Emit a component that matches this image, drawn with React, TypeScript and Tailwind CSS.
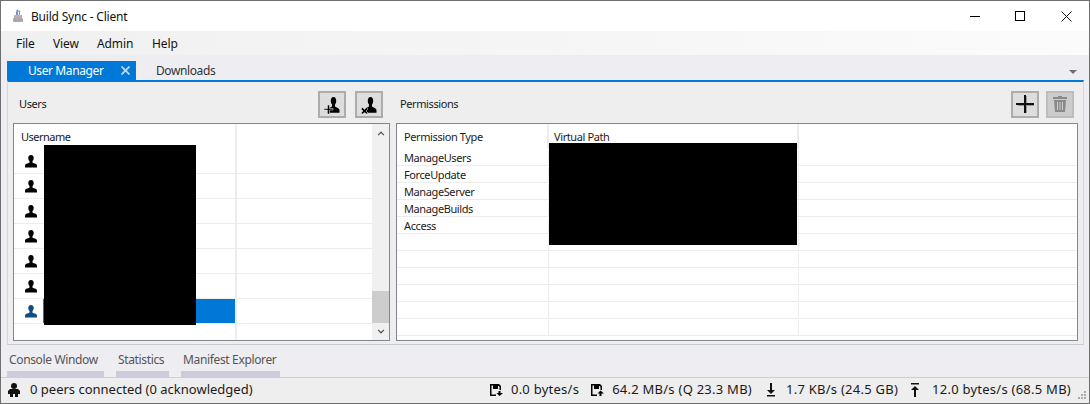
import type { ReactNode } from "react";

const rowLines = [0, 1, 2, 3, 4, 5, 6];
const permissions = ["ManageUsers", "ForceUpdate", "ManageServer", "ManageBuilds", "Access", "", "", "", "", "", ""];
const personPath =
	"M7 0c1.700 0 2.700 1.200 2.700 3 0 1.300-.5 2.400-1.200 3v1.200c0 .6.9.9 2.300 1.400 1.200.4 2.200 1 2.200 2.400v1.500H1V11c0-1.400 1-2 2.200-2.400 1.400-.5 2.300-.8 2.300-1.400V6C4.800 5.400 4.300 4.300 4.300 3 4.300 1.200 5.300 0 7 0z";

function Person({ className = "" }: { className?: string }) {
	return (
		<svg viewBox="0 0 14 13" className={className} fill="currentColor">
			<path d={personPath} />
		</svg>
	);
}

function PersonAction({ kind }: { kind: "add" | "remove" }) {
	return (
		<svg viewBox="0 0 18 18" className="ml-[2px] mt-[1px] h-[18px] w-[18px]">
			<g transform="translate(2.500 1) scale(1 1.250)">
				<path d={personPath} fill="#000" />
			</g>
			{kind === "add" ? (
				<path d="M3.500 9h2v3.500H9v1.500H5.500v4h-2v-4H0v-1.500h3.500z" fill="#000" stroke="#dddddd" strokeWidth="0.6" />
			) : (
				<path d="M1.500 11.500l2 2 2-2 1.500 1.500-2 2 2 2-1.500 1H5.500l-2-1.500-2 1.500H1.500L0 17l2-2-2-2z" fill="#000" stroke="#dddddd" strokeWidth="0.6" />
			)}
		</svg>
	);
}

function ToolButton({ children, disabled }: { children: ReactNode; disabled?: boolean }) {
	return (
		<div className={`flex h-[27px] w-[28px] items-center justify-center border-2 ${disabled ? "border-[#bdbdbd] bg-[#cccccc]" : "border-[#acacac] bg-[#dddddd]"}`}>
			{children}
		</div>
	);
}

function Disk({ arrow }: { arrow: "down" | "up" }) {
	return (
		<svg viewBox="0 0 13 12" className="h-[12px] w-[13px]">
			<path d="M0 0h9l2 2v4H9.500V2.800L8.700 2H8v3H3V1.500H1.500V10.500H6V12H0z" fill="#000" />
			<path d={arrow === "down" ? "M8.500 7h2v2H13l-3.500 3L6.500 9h2z" : "M9.500 6.500L13 9.500h-2.500V12h-2V9.500h-2z"} fill="#000" />
		</svg>
	);
}

export default function App() {
	return (
		<div className="relative flex h-[404px] w-[1090px] flex-col overflow-hidden border border-[#6f6f6f] bg-[#eeeef2] font-['Noto_Sans',sans-serif] text-[12px] text-[#1a1a1a]">
			{/* title bar */}
			<div className="flex h-[30px] items-center bg-white pl-[12px]">
				<svg viewBox="0 0 10 14" className="h-[14px] w-[10px]">
					<path d="M4 0l2 2-1 1v3H3V3z" fill="#7a8fd0" />
					<path d="M6 1l2 2H7v3H6z" fill="#d08080" />
					<rect x="1" y="6" width="8" height="3" fill="#c9a9a9" />
					<rect x="0" y="9" width="10" height="4" rx="1" fill="#a9a9a9" />
				</svg>
				<span className="ml-[8px] pt-[2px] text-[12px] tracking-[-0.2px] text-[#111]">Build Sync - Client</span>
				<div className="ml-auto flex h-full items-center pr-[17px]">
					<div className="h-px w-[10px] bg-black" />
					<div className="ml-[35px] h-[10px] w-[10px] border border-black" />
					<svg viewBox="0 0 11 11" className="ml-[36px] h-[11px] w-[11px]" stroke="#111" fill="none">
						<path d="M0.500 0.500l10 10M10.500 0.500l-10 10" />
					</svg>
				</div>
			</div>

			{/* menu */}
			<div className="flex h-[24px] items-center bg-gradient-to-r from-[#f0f0f0] to-[#fbfbfb] pl-[15px] pt-[2px] tracking-[-0.1px] text-[#111]">
				<span className="w-[37px]">File</span>
				<span className="w-[44px]">View</span>
				<span className="w-[55px]">Admin</span>
				<span>Help</span>
			</div>

			{/* document tabs */}
			<div className="flex h-[25px] items-end pl-[6px] pr-[12px]">
				<div className="flex h-[19px] w-[129px] items-center bg-[#0078d7] pl-[21px] tracking-[-0.4px] text-white">
					<span>User Manager</span>
					<svg viewBox="0 0 9 9" className="ml-[18px] h-[9px] w-[9px]" stroke="#bcd9f2" strokeWidth="1.800">
						<path d="M0.500 0.500l8 8M8.500 0.500l-8 8" />
					</svg>
				</div>
				<span className="ml-[20px] h-[19px] leading-[19px] tracking-[-0.4px] text-[#333]">Downloads</span>
				<div className="mb-[6px] ml-auto h-0 w-0 border-x-[4px] border-t-[4px] border-x-transparent border-t-[#707070]" />
			</div>

			{/* tab page */}
			<div className="ml-[6px] mr-[5px] flex h-[265px] flex-col border-x border-b border-x-[#d6d6dc] border-b-[#c8c8d0] border-t-2 border-t-[#0078d7] bg-[#eeeeee] px-[5px]">
				<div className="flex min-h-0 flex-1 gap-[6px]">
					{/* users */}
					<div className="flex w-[377px] flex-col">
						<div className="flex h-[41px] items-center pl-[6px] pt-[3px]">
							<span className="text-[11px] tracking-[-0.4px]">Users</span>
							<div className="ml-auto flex gap-[9px] pr-[7px]">
								<ToolButton><PersonAction kind="add" /></ToolButton>
								<ToolButton><PersonAction kind="remove" /></ToolButton>
							</div>
						</div>
						<div className="flex h-[218px] border border-[#82878f] bg-white">
							<div className="flex flex-1 flex-col overflow-hidden">
								<div className="flex h-[25px] shrink-0">
									<div className="w-[223px] border-r-2 border-[#ececec] pl-[7px] pt-[5px] text-[11px] tracking-[-0.5px]">Username</div>
								</div>
								{rowLines.map((i) => (
									<div key={i} className="flex h-[25px] shrink-0 border-b border-[#ececec]">
										<div className="flex w-[29px] items-center justify-end pr-[5px]">
											<Person className={`h-[13px] w-[14px] ${i === 6 ? "text-[#0f4c81]" : "text-black"}`} />
										</div>
										<div className={`w-[194px] border-r-2 border-[#ececec] ${i === 6 ? "bg-[#0078d7]" : ""}`} />
									</div>
								))}
								<div className="w-[223px] flex-1 border-r-2 border-[#ececec]" />
							</div>
							<div className="flex w-[17px] flex-col items-center bg-[#f0f0f0]">
								<svg viewBox="0 0 8 6" className="mt-[7px] h-[5px] w-[8px]" stroke="#555" strokeWidth="1.500" fill="none"><path d="M0.500 5l3.500-3.500L7.500 5" /></svg>
								<div className="mt-[155px] h-[32px] w-full bg-[#cdcdcd]" />
								<svg viewBox="0 0 8 6" className="mt-[6px] h-[5px] w-[8px]" stroke="#555" strokeWidth="1.500" fill="none"><path d="M0.500 1l3.500 3.500L7.500 1" /></svg>
							</div>
						</div>
					</div>

					{/* permissions */}
					<div className="flex flex-1 flex-col">
						<div className="flex h-[41px] items-center pl-[4px] pt-[3px]">
							<span className="text-[11px] tracking-[-0.4px]">Permissions</span>
							<div className="ml-auto flex gap-[7px] pr-[4px]">
								<ToolButton>
									<svg viewBox="0 0 18 18" className="h-[18px] w-[18px]">
										<path d="M9.500 1h1.500v8.500h7V11h-7v7H9.500v-7H2V9.500h7.500z" fill="#999" />
										<path d="M8 0h2v8h8v2h-8v8H8v-8H0V8h8z" fill="#111" />
									</svg>
								</ToolButton>
								<ToolButton disabled>
									<svg viewBox="0 0 14 16" className="h-[16px] w-[14px]" fill="#8a8a8a">
										<path d="M5 0h4v1h5v2H0V1h5zM1 4h12l-1 12H2zM4 6v8h1V6zm2.500 0v8h1V6zM9 6v8h1V6z" />
									</svg>
								</ToolButton>
							</div>
						</div>
						<div className="h-[218px] overflow-hidden border border-[#82878f] bg-white">
							<div className="flex h-[25px] text-[11px] tracking-[-0.4px]">
								<div className="w-[152px] border-r-2 border-[#ececec] pl-[7px] pt-[5px]">Permission Type</div>
								<div className="w-[250px] border-r-2 border-[#ececec] pl-[5px] pt-[5px]">Virtual Path</div>
							</div>
							{permissions.map((name, i) => (
								<div key={i} className="flex h-[17px] border-b border-[#ececec] pt-[1px] text-[11px] leading-[16px] tracking-[-0.4px]">
									<div className="w-[152px] border-r border-[#ececec] pl-[7px]">{name}</div>
									<div className="w-[250px] border-r border-[#ececec]" />
								</div>
							))}
						</div>
					</div>
				</div>
			</div>

			{/* tool window tabs */}
			<div className="flex h-[32px] gap-[12px] pl-[6px] pt-[6px] tracking-[-0.35px] text-[#555]">
				<div className="w-[97px] whitespace-nowrap border-b-[6px] border-[#ccccdc] pl-[2px]">Console Window</div>
				<div className="w-[53px] whitespace-nowrap border-b-[6px] border-[#ccccdc] pl-[2px]">Statistics</div>
				<div className="w-[99px] whitespace-nowrap border-b-[6px] border-[#ccccdc] pl-[2px]">Manifest Explorer</div>
			</div>

			{/* status bar */}
			<div className="relative flex h-[25px] items-center whitespace-nowrap border-t border-[#cfcfcf] bg-[#eeeeee] pl-[7px] pr-[18px] text-[13px]">
				<svg viewBox="0 0 12 14" className="h-[14px] w-[12px]" fill="#111">
					<circle cx="6" cy="3" r="3" />
					<path d="M2 6h8l2 2v3h-2v3H7v-3H5v3H2v-3H0V8z" />
				</svg>
				<span className="ml-[10px]">0 peers connected (0 acknowledged)</span>
				<div className="ml-auto flex items-center tracking-[0.25px]">
					<Disk arrow="down" />
					<span className="ml-[8px]">0.0 bytes/s</span>
					<span className="ml-[12px]"><Disk arrow="up" /></span>
					<span className="ml-[8px]">64.2 MB/s (Q 23.3 MB)</span>
					<svg viewBox="0 0 10 14" className="ml-[14px] h-[14px] w-[10px]" fill="#111"><path d="M4 0h2v7h3l-4 4-4-4h3zM1 12h8v1.500H1z" /></svg>
					<span className="ml-[10px]">1.7 KB/s (24.5 GB)</span>
					<svg viewBox="0 0 10 14" className="ml-[12px] h-[14px] w-[10px]" fill="#111"><path d="M1 0h8v1.500H1zM5 3l4 4H6v7H4V7H1z" /></svg>
					<span className="ml-[12px]">12.0 bytes/s (68.5 MB)</span>
				</div>
				<div className="absolute bottom-[3px] right-[3px] grid grid-cols-3 gap-px">
					{[0, 1, 2, 3, 4, 5, 6, 7, 8].map((i) => (
						<div key={i} className={`h-[2px] w-[2px] ${[0, 1, 3].includes(i) ? "bg-transparent" : "bg-[#aaaaaa]"}`} />
					))}
				</div>
			</div>

			{/* redaction boxes */}
			<div className="absolute left-[43px] top-[144px] h-[180px] w-[152px] bg-black" />
			<div className="absolute left-[548px] top-[142px] h-[102px] w-[248px] bg-black" />
		</div>
	);
}
